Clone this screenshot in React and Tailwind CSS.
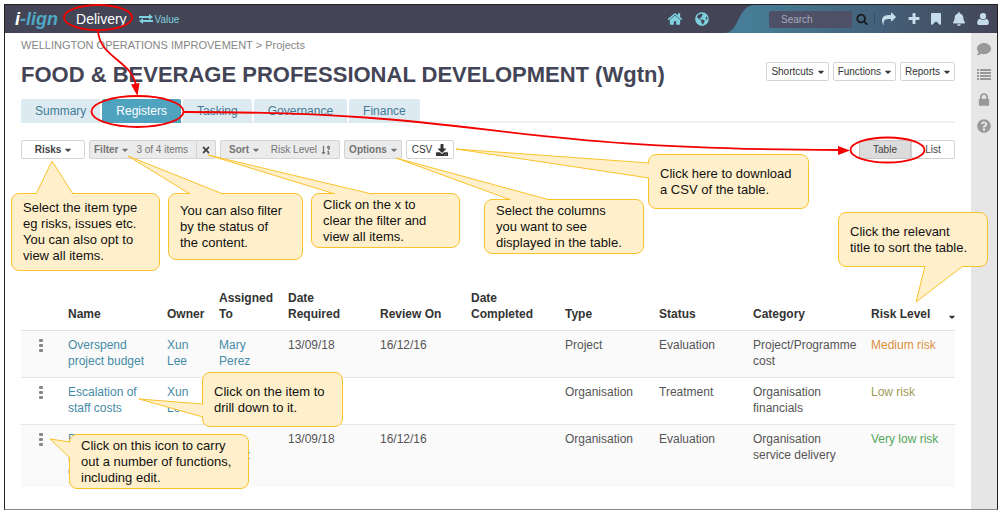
import React from "react";
import { FaBell, FaCaretDown, FaComment, FaGlobeAmericas, FaQuestionCircle, FaSortNumericDownAlt, FaTimes, FaDownload } from "react-icons/fa";

const PATHS = {
  home: "M1472 992v480q0 26-19 45t-45 19h-384v-384h-256v384h-384q-26 0-45-19t-19-45v-480q0-1 .5-3t.5-3l575-474 575 474q1 2 1 6zm223-69l-62 74q-8 9-21 11h-3q-13 0-21-7l-692-577-692 577q-12 8-24 7-13-2-21-11l-62-74q-8-10-7-23.5t11-21.5l719-599q32-26 76-26t76 26l244 204v-195q0-14 9-23t23-9h192q14 0 23 9t9 23v408l219 182q10 8 11 21.5t-7 23.5z",
  bookmark: "M1420 128q23 0 44 9 33 13 52.5 41t19.5 62v1289q0 34-19.5 62t-52.5 41q-19 8-44 8-48 0-83-32l-441-424-441 424q-36 33-83 33-23 0-44-9-33-13-52.5-41t-19.5-62v-1289q0-34 19.5-62t52.5-41q21-9 44-9h1048z",
  lock: "M640 768h512v-192q0-106-75-181t-181-75-181 75-75 181v192zm832 96v576q0 40-28 68t-68 28h-960q-40 0-68-28t-28-68v-576q0-40 28-68t68-28h32v-192q0-184 132-316t316-132 316 132 132 316v192h32q40 0 68 28t28 68z",
  search: "M1216 832q0-185-131.5-316.5t-316.5-131.5-316.5 131.5-131.5 316.5 131.5 316.5 316.5 131.5 316.5-131.5 131.5-316.5zm512 832q0 52-38 90t-90 38q-54 0-90-38l-343-342q-179 124-399 124-143 0-273.5-55.5t-225-150-150-225-55.5-273.5 55.5-273.5 150-225 225-150 273.5-55.5 273.5 55.5 225 150 150 225 55.5 273.5q0 220-124 399l343 343q37 37 37 90z",
  plus: "M1600 736v192q0 40-28 68t-68 28h-416v416q0 40-28 68t-68 28h-192q-40 0-68-28t-28-68v-416h-416q-40 0-68-28t-28-68v-192q0-40 28-68t68-28h416v-416q0-40 28-68t68-28h192q40 0 68 28t28 68v416h416q40 0 68 28t28 68z",
  share: "M1792 640q0 26-19 45l-512 512q-19 19-45 19t-45-19-19-45v-256h-224q-98 0-175.5 6t-154 21.5-133 42.5-105.5 69.5-80 101-48.5 138.5-17.5 181q0 55 5 123 0 6 2.5 23.5t2.5 26.5q0 15-8.5 25t-23.5 10q-16 0-28-17-7-9-13-22t-13.5-30-10.5-24q-127-285-127-451 0-199 53-333 162-403 875-403h224v-256q0-26 19-45t45-19 45 19l512 512q19 19 19 45z",
  user: "M896 130a400 400 0 0 1 400 400a400 400 0 0 1-800 0a400 400 0 0 1 400-400zM480 860q170 150 416 150t416-150q330 90 330 560q0 240-220 240h-1052q-220 0-220-240q0-470 330-560z",
};

function Glyph({ name, className }) {
  return (
    <svg viewBox="0 0 1792 1792" fill="currentColor" className={className} aria-hidden="true">
      <path d={PATHS[name]} />
    </svg>
  );
}

function IconButton({ label, className = "", children }) {
  return (
    <button type="button" aria-label={label} className={"flex items-center justify-center " + className}>
      {children}
    </button>
  );
}

function Header() {
  return (
    <header className="flex h-7 items-stretch bg-[#434556] text-[#7fd0de]">
      <div className="flex flex-1 items-center pl-2.5">
        <a href="#home" className="text-lg leading-7 font-bold italic text-[#4fa9c4]">
          <span className="text-white">i</span>-lign
        </a>
        <a href="#delivery" className="ml-[18px] text-sm text-white">Delivery</a>
        <a href="#value" className="ml-3 flex items-center gap-0.5 text-[10px]">
          <svg viewBox="0 0 14 10" className="h-2.5 w-3.5" fill="currentColor" aria-hidden="true">
            <path d="M0 2h10V0l4 3-4 3V4H0zM14 6H4V4L0 7l4 3V8h10z" />
          </svg>
          Value
        </a>
        <div className="mr-4 ml-auto flex items-center gap-3">
          <IconButton label="Home"><Glyph name="home" className="size-4" /></IconButton>
          <IconButton label="World"><FaGlobeAmericas className="size-3.5" /></IconButton>
        </div>
      </div>
      <div className="flex">
        <svg viewBox="0 0 30 28" className="h-7 w-[30px]" aria-hidden="true">
          <path d="M0 28C15 27 12 0 30 0V28Z" fill="#467c95" />
        </svg>
        <div className="flex items-center bg-linear-to-r from-[#467c95] via-[#43617a] to-[#434556] pr-[7px] pl-3.5 text-[#c5dcea]">
          <input
            aria-label="Search"
            placeholder="Search"
            className="h-[17px] w-[83px] rounded-xs bg-[#4e5068] px-3 text-[10px] placeholder:text-[#a9abbb]"
          />
          <IconButton label="Find" className="ml-1 text-[#15171c]"><Glyph name="search" className="size-3" /></IconButton>
          <span className="ml-1.5 h-3 w-px bg-[#35506a]" />
          <IconButton label="Share" className="ml-[7px]"><Glyph name="share" className="size-3.5" /></IconButton>
          <IconButton label="Add" className="ml-[11px]"><Glyph name="plus" className="size-3.5" /></IconButton>
          <IconButton label="Bookmarks" className="ml-2"><Glyph name="bookmark" className="size-3.5" /></IconButton>
          <IconButton label="Alerts" className="ml-[9px]"><FaBell className="size-3.5" /></IconButton>
          <IconButton label="Account" className="ml-2.5"><Glyph name="user" className="size-3.5" /></IconButton>
        </div>
      </div>
    </header>
  );
}

function Caret() {
  return <FaCaretDown className="h-2.5 w-1.5" aria-hidden="true" />;
}

function MenuButton({ children }) {
  return (
    <button type="button" className="flex h-[19px] items-center gap-1 rounded-xs border border-[#d4d4d4] bg-white px-1 text-[10px] text-[#333]">
      {children}
      <Caret />
    </button>
  );
}

const TABS = ["Summary", "Registers", "Tasking", "Governance", "Finance"];

function Tabs() {
  return (
    <nav className="mt-[11px] flex gap-0.5 border-b-2 border-[#ecf2f6]">
      {TABS.map((tab) => (
        <a
          key={tab}
          href={"#" + tab.toLowerCase()}
          className={
            "-mb-0.5 h-6 rounded-t-xs px-3.5 text-xs leading-6 " +
            (tab === "Registers" ? "bg-[#4fa3bf] text-white" : "bg-[#deeaf1] text-[#3f7c96]")
          }
        >
          {tab}
        </a>
      ))}
    </nav>
  );
}

function Toolbar() {
  const base = "flex h-[19px] items-center rounded-xs border ";
  const grey = base + "border-[#d4d4d4] bg-[#ebebeb] text-[#757575]";
  return (
    <div className="mt-[17px] flex items-center gap-1 text-[10px]">
      <button type="button" className={base + "w-16 justify-center gap-1 border-[#d4d4d4] bg-white font-bold text-[#444]"}>
        Risks <Caret />
      </button>
      <div className={grey + " w-[127px] justify-between"}>
        <button type="button" className="flex items-center gap-1 pl-1 font-bold">Filter <Caret /></button>
        <span>3 of 4 items</span>
        <button type="button" aria-label="Clear filter" className="flex h-full w-[19px] items-center justify-center border-l border-[#d4d4d4] text-[#444]">
          <FaTimes className="size-2.5" />
        </button>
      </div>
      <div className={grey + " w-[120px] justify-between px-2"}>
        <button type="button" className="flex items-center gap-1 font-bold">Sort <Caret /></button>
        <button type="button" className="flex items-center gap-1 whitespace-nowrap">
          Risk Level <FaSortNumericDownAlt className="size-2.5" />
        </button>
      </div>
      <button type="button" className={grey + " w-[58px] justify-center gap-1 font-bold"}>Options <Caret /></button>
      <button type="button" className={base + "w-12 justify-center gap-1 border-[#d4d4d4] bg-white text-[#333]"}>
        CSV <FaDownload className="size-3" />
      </button>
      <div className="ml-auto flex">
        <button type="button" className={base + "w-[52px] justify-center border-[#c6c6c6] bg-[#dcdcdc] text-[#444]"}>Table</button>
        <button type="button" className={base + "w-11 justify-center border-[#d4d4d4] bg-white text-[#444]"}>List</button>
      </div>
    </div>
  );
}

const COLUMNS = [
  ["Name", "w-[99px]"],
  ["Owner", "w-[52px]"],
  ["Assigned To", "w-[69px]"],
  ["Date Required", "w-[92px]"],
  ["Review On", "w-[91px]"],
  ["Date Completed", "w-[94px]"],
  ["Type", "w-[94px]"],
  ["Status", "w-[94px]"],
  ["Category", "w-[118px]"],
];

const ROWS = [
  { name: "Overspend project budget", owner: "Xun Lee", assigned: "Mary Perez", required: "13/09/18", review: "16/12/16", type: "Project", status: "Evaluation", category: "Project/Programme cost", risk: "Medium risk", tone: "text-[#dc8f3e]" },
  { name: "Escalation of staff costs", owner: "Xun Lee", assigned: "", required: "", review: "", type: "Organisation", status: "Treatment", category: "Organisation financials", risk: "Low risk", tone: "text-[#a09a55]" },
  { name: "Disruption to programme operations", owner: "Xun Lee", assigned: "Mary Perez", required: "13/09/18", review: "16/12/16", type: "Organisation", status: "Evaluation", category: "Organisation service delivery", risk: "Very low risk", tone: "text-[#55a65a]" },
];

function RiskTable() {
  const cell = "pt-1.5 pr-1 pb-2 pl-2 align-top";
  return (
    <table className="mt-[131px] w-full table-fixed border-collapse text-left text-xs leading-4 text-[#555]">
      <thead className="align-bottom text-[#333]">
        <tr className="border-b border-[#e2e2e2]">
          <th className="w-[39px]" aria-label="Actions" />
          {COLUMNS.map(([title, width]) => (
            <th key={title} className={width + " pr-1 pb-2 pl-2 font-bold"}>{title}</th>
          ))}
          <th className="pb-2 pl-2 font-bold">
            <button type="button" className="flex w-full items-end justify-between">
              Risk Level <Caret />
            </button>
          </th>
        </tr>
      </thead>
      <tbody>
        {ROWS.map((row) => (
          <tr key={row.name} className="border-b border-[#e6e6e6] odd:bg-[#fafafa] last:border-b-0">
            <td className="pt-2 align-top">
              <button type="button" aria-label={"Actions for " + row.name} className="mx-auto block">
                <svg viewBox="0 0 4 13" className="h-[13px] w-1" fill="#888" aria-hidden="true">
                  <rect width="4" height="3" rx="1" />
                  <rect y="5" width="4" height="3" rx="1" />
                  <rect y="10" width="4" height="3" rx="1" />
                </svg>
              </button>
            </td>
            <td className={cell}><a href="#item" className="text-[#458ba6]">{row.name}</a></td>
            <td className={cell + " pr-3"}><a href="#owner" className="text-[#458ba6]">{row.owner}</a></td>
            <td className={cell + " pr-5"}><a href="#assignee" className="text-[#458ba6]">{row.assigned}</a></td>
            <td className={cell}>{row.required}</td>
            <td className={cell}>{row.review}</td>
            <td className={cell} />
            <td className={cell}>{row.type}</td>
            <td className={cell}>{row.status}</td>
            <td className={cell}>{row.category}</td>
            <td className={cell + " " + row.tone}>{row.risk}</td>
          </tr>
        ))}
      </tbody>
    </table>
  );
}

function SideRail() {
  return (
    <aside className="flex w-[26px] flex-col items-center gap-[11px] bg-[#e6e6e6] pt-[9px] text-[#999]">
      <IconButton label="Comments"><FaComment className="size-3.5" /></IconButton>
      <IconButton label="List">
        <svg viewBox="0 0 14 14" className="size-3.5" fill="currentColor" aria-hidden="true">
          <path d="M0 2h2v2H0zM3 2h11v2H3zM0 5h2v2H0zM3 5h11v2H3zM0 8h2v2H0zM3 8h11v2H3zM0 11h2v2H0zM3 11h11v2H3z" />
        </svg>
      </IconButton>
      <IconButton label="Permissions"><Glyph name="lock" className="size-4" /></IconButton>
      <IconButton label="Help"><FaQuestionCircle className="size-3.5" /></IconButton>
    </aside>
  );
}

const CALLOUTS = [
  { box: "left-[11px] top-[193px] w-[149px] h-[78px]", lines: ["Select the item type", "eg risks, issues etc.", "You can also opt to", "view all items."], tail: "36,194 52,161 73,194" },
  { box: "left-[168px] top-[193px] w-[135px] h-[67px]", lines: ["You can also filter", "by the status of", "the content."], tail: "190,194 128,156 223,194" },
  { box: "left-[311px] top-[193px] w-[149px] h-[55px]", lines: ["Click on the x to", "clear the filter and", "view all items."], tail: "335,194 208,155 372,194" },
  { box: "left-[484px] top-[199px] w-[160px] h-[55px]", lines: ["Select the columns", "you want to see", "displayed in the table."], tail: "511,200 396,158 550,200" },
  { box: "left-[648px] top-[154px] w-[161px] h-[55px]", lines: ["Click here to download", "a CSV of the table."], tail: "649,163 456,149 649,178" },
  { box: "left-[838px] top-[212px] w-[150px] h-[55px]", lines: ["Click the relevant", "title to sort the table."], tail: "925,266 916,302 963,266" },
  { box: "left-[202px] top-[372px] w-[141px] h-[55px]", lines: ["Click on the item to", "drill down to it."], tail: "203,404 139,399 203,417" },
  { box: "left-[69px] top-[434px] w-[180px] h-[55px]", lines: ["Click on this icon to carry", "out a number of functions,", "including edit."], tail: "70,442 50,439 70,458" },
];

function Annotations() {
  return (
    <div className="pointer-events-none absolute top-0 left-0 h-[516px] w-[1003px]">
      <svg viewBox="0 0 1003 516" className="absolute inset-0 h-full w-full" fill="none" stroke="#f40000" strokeWidth="1.8" aria-hidden="true">
        <ellipse cx="98" cy="17.5" rx="34" ry="12.5" />
        <path d="M98 30C99 58 132 60 136 86" />
        <path d="M137.500 96L131 84.500L139.500 83Z" fill="#f40000" stroke="none" />
        <ellipse cx="137.500" cy="111.500" rx="46" ry="15.500" />
        <path d="M184 112C500 112 480 149 840 150" />
        <path d="M850 150.500L838 146V155Z" fill="#f40000" stroke="none" />
        <ellipse cx="887.500" cy="150" rx="37" ry="12.500" />
      </svg>
      {CALLOUTS.map(({ box, lines }) => (
        <div key={lines[0]} className={"absolute flex flex-col justify-center rounded-lg border border-[#f9c32c] bg-[#fff0cb] pl-[11px] text-[13px] leading-4 whitespace-nowrap text-[#111] " + box}>
          {lines.map((line) => (
            <p key={line}>{line}</p>
          ))}
        </div>
      ))}
      <svg viewBox="0 0 1003 516" className="absolute inset-0 h-full w-full" aria-hidden="true">
        {CALLOUTS.map(({ tail }) => (
          <g key={tail}>
            <polygon points={tail} fill="#fff0cb" />
            <polyline points={tail} fill="none" stroke="#f9c32c" />
          </g>
        ))}
      </svg>
    </div>
  );
}

export default function App() {
  return (
    <div className="relative min-h-screen bg-white pt-1 pr-[5px] pb-1.5 pl-1 font-['Liberation_Sans',Arial,sans-serif]">
      <div className="border border-[#222] border-b-[#888]">
        <Header />
        <div className="flex">
          <main className="min-w-0 flex-1 px-4 pt-1 pb-[22px]">
            <p className="text-[11px] leading-4 text-[#858585]">WELLINGTON OPERATIONS IMPROVEMENT &gt; Projects</p>
            <div className="mt-[9px] flex items-start justify-between">
              <h1 className="text-[22px] leading-[26px] font-bold whitespace-nowrap text-[#434556]">
                FOOD &amp; BEVERAGE PROFESSIONAL DEVELOPMENT (Wgtn)
              </h1>
              <div className="flex gap-1">
                <MenuButton>Shortcuts</MenuButton>
                <MenuButton>Functions</MenuButton>
                <MenuButton>Reports</MenuButton>
              </div>
            </div>
            <Tabs />
            <Toolbar />
            <RiskTable />
          </main>
          <SideRail />
        </div>
      </div>
      <Annotations />
    </div>
  );
}
